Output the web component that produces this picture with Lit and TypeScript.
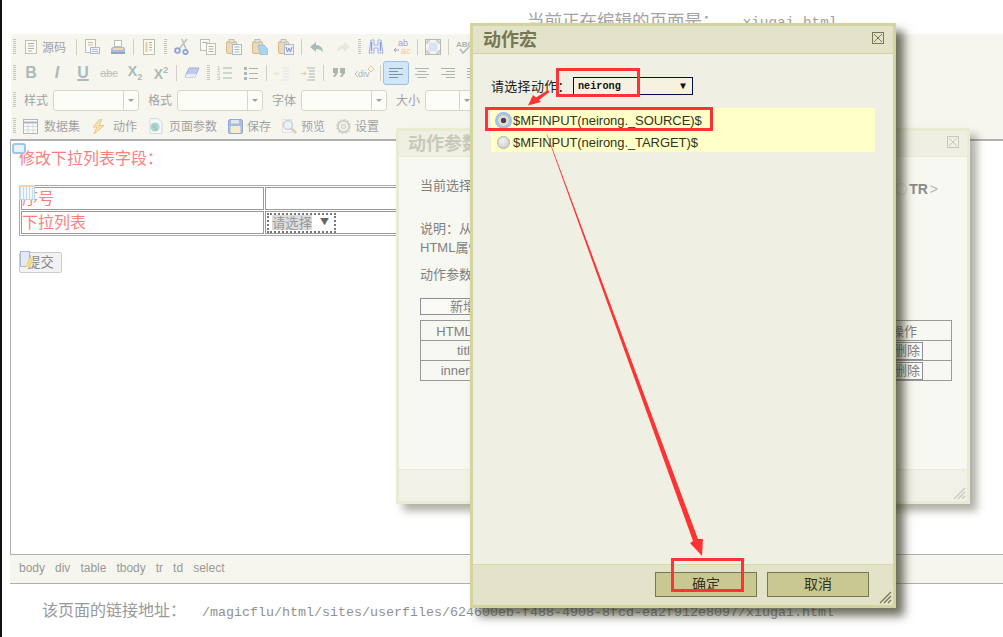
import { LitElement, html, css } from "lit";
import { customElement } from "lit/decorators.js";

const doc = (extra: unknown = "") => html`<svg width="16" height="16" viewBox="0 0 16 16"><rect x="2.5" y="1.5" width="11" height="13" fill="#fbfbf6" stroke="#bfc0b4"/><path d="M5 4.5h6M5 7h6M5 9.5h6M5 12h4" stroke="#a9b5ae"/>${extra}</svg>`;

const icons: Record<string, unknown> = {
  source: doc(),
  newpage: html`<svg width="16" height="16" viewBox="0 0 16 16"><rect x="1.5" y="0.5" width="10" height="13" fill="#fbfbf6" stroke="#bfc0b4"/><path d="M4 3.5h5M4 6h5" stroke="#e3b98a"/><rect x="6.5" y="8.5" width="9" height="6" fill="#eef1fb" stroke="#a9b8de"/><path d="M8 10.5h6M8 12.5h6" stroke="#b4c0e0"/></svg>`,
  print: html`<svg width="16" height="16" viewBox="0 0 16 16"><rect x="4.5" y="1.5" width="7" height="6" fill="#fbfbf6" stroke="#bfc0b4"/><path d="M2 8h12l1 2v4H1v-4z" fill="#a9bbdf"/><rect x="3" y="9" width="10" height="2" fill="#efd9a9"/><rect x="1" y="13" width="14" height="2" fill="#8ea4cf"/></svg>`,
  preview: html`<svg width="16" height="16" viewBox="0 0 16 16"><rect x="2.5" y="0.5" width="11" height="15" fill="#fbfbf6" stroke="#bfc0b4"/><path d="M5.5 3v10" stroke="#efc98f" stroke-width="2"/><path d="M8 3.5h3M8 6h3M8 8.5h3M8 11h3" stroke="#a9b5ae"/></svg>`,
  cut: html`<svg width="16" height="16" viewBox="0 0 16 16"><path d="M13 0 6 9M8 0l4 10" stroke="#bcc2c2" stroke-width="1.6" fill="none"/><circle cx="3.5" cy="11.5" r="2.4" fill="none" stroke="#8da3d6" stroke-width="1.8"/><circle cx="11.5" cy="13" r="2.2" fill="none" stroke="#8da3d6" stroke-width="1.8"/></svg>`,
  copy: html`<svg width="16" height="16" viewBox="0 0 16 16"><rect x="0.5" y="0.5" width="9" height="11" fill="#fbfbf6" stroke="#bfc0b4"/><rect x="6.5" y="4.5" width="9" height="11" fill="#fbfbf6" stroke="#bfc0b4"/><path d="M8.5 7.5h5M8.5 10h5M8.5 12.5h5M2.5 3.5h5" stroke="#a9b5ae"/></svg>`,
  paste: html`<svg width="16" height="16" viewBox="0 0 16 16"><rect x="0.5" y="2.5" width="10" height="12" rx="1.5" fill="#f2d8b2" stroke="#d4b98e"/><rect x="3" y="0.5" width="5" height="3" fill="#e4e4da" stroke="#bfc0b4"/><rect x="6.5" y="5.5" width="9" height="10" fill="#fbfbf6" stroke="#a9b8de"/><path d="M8.5 8h5M8.5 10.5h5M8.5 13h5" stroke="#a9b5ae"/></svg>`,
  pastetext: html`<svg width="16" height="16" viewBox="0 0 16 16"><rect x="0.5" y="2.5" width="10" height="12" rx="1.5" fill="#f2d8b2" stroke="#d4b98e"/><rect x="3" y="0.5" width="5" height="3" fill="#e4e4da" stroke="#bfc0b4"/><path d="M6 6h6l3.5 4v5.5H8z" fill="#a7d6ec" stroke="#9cc4dc"/></svg>`,
  pasteword: html`<svg width="16" height="16" viewBox="0 0 16 16"><rect x="0.5" y="2.5" width="10" height="12" rx="1.5" fill="#f2d8b2" stroke="#d4b98e"/><rect x="3" y="0.5" width="5" height="3" fill="#e4e4da" stroke="#bfc0b4"/><rect x="6.5" y="5.5" width="9" height="10" fill="#eef1fb" stroke="#a9b8de"/><path d="M8 8l1.5 5 1.5-4 1.5 4L14 8" stroke="#7f94c8" fill="none"/></svg>`,
  undo: html`<svg width="16" height="16" viewBox="0 0 16 16"><path d="M7 3 1 8l6 5v-3c3 0 5 1 7 3 0-4-3-7-7-7z" fill="#a9bbb8"/></svg>`,
  redo: html`<svg width="16" height="16" viewBox="0 0 16 16"><path d="m9 3 6 5-6 5v-3c-3 0-5 1-7 3 0-4 3-7 7-7z" fill="#e6e9e2"/></svg>`,
  find: html`<svg width="16" height="16" viewBox="0 0 16 16"><path d="M3 1h3v5h4V1h3l2 13h-5V9H6v5H1z" fill="#eef1fb" stroke="#a3b1de"/><path d="M3.5 3v9M12.5 3v9" stroke="#8fa0d4" stroke-width="1.5"/></svg>`,
  replace: html`<svg width="18" height="16" viewBox="0 0 18 16"><text x="5" y="7" font-size="9" font-family="Liberation Sans" fill="#a79bd0">ab</text><text x="8" y="15" font-size="9" font-family="Liberation Sans" fill="#efc98f">ac</text><path d="M1 11h5M3 9l-2 2 2 2" stroke="#a79bd0" fill="none"/></svg>`,
  max: html`<svg width="16" height="16" viewBox="0 0 16 16"><rect x="0.5" y="0.5" width="15" height="15" fill="none" stroke="#b4b9b2"/><rect x="3.5" y="3.5" width="9" height="9" fill="#dbe3f2"/><path d="M2 2h3M2 2v3M14 2h-3M14 2v3M2 14h3M2 14v-3M14 14h-3M14 14v-3" stroke="#a9b5ae"/></svg>`,
  spell: html`<svg width="16" height="16" viewBox="0 0 16 16"><text x="0" y="8" font-size="8" font-weight="700" font-family="Liberation Sans" fill="#a9b5ae">ABC</text><path d="m4 10 3 4 6-6" stroke="#a9bbb8" stroke-width="1.5" fill="none"/></svg>`,
  eraser: html`<svg width="16" height="12" viewBox="0 0 16 12"><path d="M5 1h10l-4 9H1z" fill="#bccbee" stroke="#a3b1de"/><path d="M1 10h10l1.5-3H3z" fill="#e9edf8"/></svg>`,
  ol: html`<svg width="16" height="16" viewBox="0 0 16 16"><text x="0" y="5" font-size="5.5" font-family="Liberation Sans" fill="#a9b5ae">1</text><text x="0" y="10" font-size="5.5" font-family="Liberation Sans" fill="#a9b5ae">2</text><text x="0" y="15" font-size="5.5" font-family="Liberation Sans" fill="#a9b5ae">3</text><path d="M6 3h9M6 8h9M6 13h9" stroke="#a9b5ae"/></svg>`,
  ul: html`<svg width="16" height="16" viewBox="0 0 16 16"><path d="M1 2h3v3H1zM1 7h3v3H1zM1 12h3v3H1z" fill="#a9bbb8"/><path d="M6 3.5h9M6 8.5h9M6 13.5h9" stroke="#a9b5ae"/></svg>`,
  outdent: html`<svg width="16" height="16" viewBox="0 0 16 16"><path d="M7 3h8M9 6h6M9 9h6M9 12h6M7 15h8" stroke="#e2e5de"/><path d="M6 8.5H1M3 6.5l-2 2 2 2" stroke="#f5e2c6" fill="none"/></svg>`,
  indent: html`<svg width="16" height="16" viewBox="0 0 16 16"><path d="M7 3h8M9 6h6M9 9h6M9 12h6M7 15h8" stroke="#a9b5ae"/><path d="M1 8.5h5M4 6.5l2 2-2 2" stroke="#efc98f" fill="none"/></svg>`,
  quote: html`<svg width="16" height="16" viewBox="0 0 16 16"><path d="M2 3h5v5l-3 4H2l2-4H2zM9 3h5v5l-3 4H9l2-4H9z" fill="#a9b5ae"/></svg>`,
  div: html`<svg width="20" height="16" viewBox="0 0 20 16"><text x="3" y="12" font-size="9" font-family="Liberation Sans" fill="#a9b5ae">div</text><path d="M3 6 0 9l3 3" stroke="#bfc4bc" fill="none"/><path d="m16 1 3 3-3 3-3-3z" fill="none" stroke="#efc98f"/></svg>`,
  left: html`<svg width="14" height="12" viewBox="0 0 14 12"><path d="M0 1.5h14M0 4.5h9M0 7.5h14M0 10.5h9" stroke="#7f9696"/></svg>`,
  center: html`<svg width="14" height="12" viewBox="0 0 14 12"><path d="M0 1.5h14M2.5 4.5h9M0 7.5h14M2.5 10.5h9" stroke="#a9b5ae"/></svg>`,
  right: html`<svg width="14" height="12" viewBox="0 0 14 12"><path d="M0 1.5h14M5 4.5h9M0 7.5h14M5 10.5h9" stroke="#a9b5ae"/></svg>`,
  justify: html`<svg width="14" height="12" viewBox="0 0 14 12"><path d="M0 1.5h14M0 4.5h14M0 7.5h14M0 10.5h14" stroke="#a9b5ae"/></svg>`,
  table: html`<svg width="15" height="15" viewBox="0 0 15 15"><rect x="0.5" y="0.5" width="14" height="14" fill="#fbfbf6" stroke="#aab7c4"/><path d="M0 3.5h15" stroke="#aab7c4" stroke-width="2"/><path d="M5 4v10M10 4v10M1 7.5h13M1 11h13" stroke="#d5dade"/></svg>`,
  bolt: html`<svg width="15" height="15" viewBox="0 0 15 15"><path d="M9 0 2 8h4l-3 7 10-8.5H8l3-6.5z" fill="#f6e3b0" stroke="#e3c88a"/></svg>`,
  globe: html`<svg width="15" height="16" viewBox="0 0 15 16"><path d="M2 .5h8l4 4v11H2z" fill="#f4f6f8" stroke="#d3d8dc"/><circle cx="7" cy="9" r="4.5" fill="#a9d3e8"/><path d="M4 7c2-2 4-1 4 1s2 2 1 4-3 1-3-1-3-1-2-4z" fill="#a7cfa0"/></svg>`,
  save: html`<svg width="15" height="15" viewBox="0 0 15 15"><rect x="0.5" y="0.5" width="14" height="14" rx="1.5" fill="#a8bcdf" stroke="#97abd2"/><rect x="3" y="1" width="8" height="3.5" fill="#dfe6f2"/><rect x="2.5" y="7" width="10" height="7" fill="#f7ecc8"/></svg>`,
  search: html`<svg width="15" height="15" viewBox="0 0 15 15"><rect x="0.5" y="0.5" width="9" height="13" fill="#fbfbf8" stroke="#e2e2da"/><circle cx="6" cy="6" r="4.5" fill="#e8f1f6" stroke="#c9d2d6" stroke-width="1.5"/><path d="m9.500 9.500 4.500 4.500" stroke="#d8cfc0" stroke-width="2.5"/></svg>`,
  gear: html`<svg width="15" height="15" viewBox="0 0 16 16"><circle cx="8" cy="8" r="6" fill="none" stroke="#c9cbc4" stroke-width="2"/><circle cx="8" cy="8" r="7" fill="none" stroke="#d3d5ce" stroke-width="2" stroke-dasharray="2 1.66"/><circle cx="8" cy="8" r="2.5" fill="#e8e9e3" stroke="#c9cbc4"/></svg>`,
};

const resizer = (c: string) => html`<svg class="resizer" width="13" height="13" viewBox="0 0 13 13"><path d="M1 12 12 1M5 12l7-7M9 12l3-3" stroke=${c} stroke-width="1.3"/></svg>`;
const closeX = (c: string) => html`<svg width="12" height="12" viewBox="0 0 12 12"><rect x="0.5" y="0.5" width="11" height="11" fill="none" stroke=${c}/><path d="m2 2 8 8M10 2l-8 8" stroke=${c}/></svg>`;

@customElement("app-root")
export class AppRoot extends LitElement {
  static styles = css`
    :host { display: block; width: 1003px; height: 637px; position: relative; overflow: hidden; background: #fff;
      font-family: "Noto Sans CJK SC", "Liberation Sans", sans-serif; }
    .page { height: 637px; border-left: 2px solid #111; display: flex; flex-direction: column; box-sizing: border-box; color: #999; }
    .top { height: 34px; flex: none; padding-left: 525px; font-size: 17.5px; line-height: 40px; white-space: nowrap; overflow: hidden; color: #a4a4a4; }
    .mono { font-family: "Liberation Mono", monospace; }
    .top .mono { font-size: 14.4px; margin-left: 23px; }
    .editor { margin-left: 8px; flex: none; height: 550px; display: flex; flex-direction: column; }
    .toolbar { background: #f6f6ef; height: 105px; flex: none; font-size: 12px; color: #a2a2a2; margin-left: 1px; white-space: nowrap; }
    .row { display: flex; align-items: center; padding-left: 2px; }
    .r1, .r2 { height: 26px; }
    .r3 { height: 28px; }
    .r4 { height: 24px; }
    .grip { width: 3px; height: 16px; margin: 0 2px 0 0; flex: none;
      background: repeating-linear-gradient(to bottom, #c6c6bc 0 1px, transparent 1px 2px); }
    .gripmid { margin-left: 2px; }
    .sep { width: 1px; height: 16px; background: #cfcfc6; margin: 0 2px; flex: none; }
    .btn { width: 26px; height: 24px; flex: none; display: flex; align-items: center; justify-content: center; box-sizing: border-box; }
    .src { display: flex; align-items: center; margin-left: 7px; gap: 3px; margin-right: 8px; }
    .src svg { margin-left: -2px; }
    .src span { padding-bottom: 2px; }
    .fmt { color: #aabab8; font-family: "Liberation Sans", sans-serif; font-size: 16px; line-height: 1; }
    .b { font-weight: 700; }
    .i { font-style: italic; font-weight: 700; }
    .u { font-weight: 700; text-decoration: underline; text-decoration-thickness: 2px; }
    .s { font-size: 11px; text-decoration: line-through; color: #bcc4c0; }
    .sub, .sup { font-weight: 700; font-size: 14px; }
    .fmt small { font-size: 9px; }
    .sub small { vertical-align: -4px; }
    .sup small { vertical-align: 6px; }
    .active { background: #cfe6fb; border: 1px solid #9dbfe6; border-radius: 3px; }
    .lbl { margin: 0 5px 0 9px; flex: none; width: 24px; font-size: 12px; padding-bottom: 2px; }
    .r3 .grip { margin-right: -1px; }
    .combo { width: 86px; height: 21px; box-sizing: border-box; border: 1px solid #d6d6ca; border-radius: 3px; background: #fdfdf8; display: flex; justify-content: flex-end; flex: none; }
    .combo.small { width: 50px; }
    .combo i { width: 14px; border-left: 1px solid #d6d6ca; display: flex; align-items: center; justify-content: center; }
    .combo i::after { content: ""; border: 3px solid transparent; border-top-color: #a0a0a0; margin-top: 3px; }
    .r4 .grip { margin-right: -4px; }
    .tool { display: flex; align-items: center; margin-left: 11px; flex: none; }
    .tool span { padding-bottom: 2px; }
    .g4 { gap: 4px; } .g6 { gap: 6px; } .g7 { gap: 7px; }
    .content { flex: 1; background: #fff; border-top: 2px solid #b0b0b0; border-left: 1px solid #b0b0b0; padding: 4px 0 0 8px; position: relative; color: #ff7d7d; }
    .heading { font-size: 16px; line-height: 24px; }
    table.form { margin-top: 16px; width: 510px; border: 1px solid #aaa; border-spacing: 1px; font-size: 16px; }
    table.form td { box-sizing: border-box; border: 1px solid #999; padding: 0 0 3px 0; height: 22px; line-height: 18px; }
    table.form tr + tr td { height: 23px; }
    table.form td:first-child { width: 243px; }
    table.form td.plain { padding: 0 0 0 1px; vertical-align: top; }
    .sel { display: inline-flex; box-sizing: border-box; align-items: center; height: 20px; width: 69px; border: 2px dotted #777; font-size: 13.333px; color: #999; vertical-align: top; margin-top: 1px; padding: 0 0 2px 3px; gap: 8px; }
    .sel b { background: #ddd; font-weight: 400; line-height: 15px; }
    .sel em { font-style: normal; color: #666; font-size: 9px; }
    .submit { margin-top: 16px; width: 43px; height: 21px; box-sizing: border-box; background: #f2f2f2; border: 1px solid #ccc; border-radius: 2px; font-size: 13.333px; color: #888; display: flex; align-items: center; justify-content: center; padding-bottom: 2px; line-height: 1; }
    .ov { position: absolute; }
    .bubble { left: 1px; top: 2px; width: 14px; height: 11px; box-sizing: border-box; border: 2px solid #9cc7ec; border-radius: 3px; background: #e7f3fc; }
    .tblmark { left: 8px; top: 44px; width: 16px; height: 15px; box-sizing: border-box; border: 1px solid #b9d7ee; border-top: 2px solid #f3d6a3; background: repeating-linear-gradient(to right, #bcdcf5 0 1px, #f2f8fd 1px 3px); }
    .btnmark { left: 9px; top: 110px; width: 8px; height: 14px; background: #e4eaf4; border: 1px solid #aab7c9; }
    .btnmark::after { content: ""; position: absolute; left: 6px; top: 6px; width: 5px; height: 9px; background: #f3d98c; transform: skewX(-15deg); }
    .path { height: 30px; box-sizing: border-box; flex: none; background: #f6f6ef; border-top: 1px solid #b0b0b0; border-bottom: 1px solid #b0b0b0; display: flex; align-items: center; gap: 10px; padding: 0 0 3px 9px; font: 12px "Liberation Sans", sans-serif; color: #999; }
    .foot { padding: 13px 0 0 40px; font-size: 16px; line-height: 24px; color: #999; white-space: nowrap; }
    .foot .mono { font-size: 13.333px; margin-left: 16px; color: #909090; }

    .dlg { position: absolute; box-sizing: border-box; display: flex; flex-direction: column; }
    .d2 { left: 396px; top: 128px; width: 574px; height: 376px; border: 3px solid #e9ebd2; background: #f8f8f2; box-shadow: 7px 7px 8px rgba(60,60,40,.4); color: #808080; font: 13px "Liberation Sans", "Noto Sans CJK SC", sans-serif; }
    .d2 .hd { height: 26px; background: #efefe3; display: flex; align-items: center; justify-content: space-between; padding: 0 8px 3px 9px; box-sizing: border-box; flex: none; font-size: 18px; font-weight: 700; color: #c9c9b7; border-bottom: 1px solid #e9ebd2; }
    .d2 .bd { flex: 1; padding: 20px 16px 0 21px; display: flex; flex-direction: column; }
    .d2 p { margin: 0; line-height: 19px; white-space: nowrap; overflow: hidden; }
    .d2 .first { display: flex; justify-content: space-between; padding-right: 13px; align-items: center; height: 24px; margin-bottom: 18px; }
    .d2 .first > span:first-child { padding-bottom: 8px; }
    .trsel { display: flex; align-items: center; gap: 2px; font: 700 14px "Liberation Sans", sans-serif; color: #8a8a8a; }
    .trsel span { font-weight: 400; color: #b5b5b5; }
    .radio2 { width: 10px; height: 10px; border: 1px solid #ddd; border-radius: 50%; display: block; }
    .d2 .mt { margin-top: 8px; }
    .addbtn { margin-top: 14px; width: 86px; height: 17px; box-sizing: border-box; border: 1px solid #8e8ca0; background: #fbf9f3; text-align: center; line-height: 15px; }
    table.params { margin-top: 5px; width: 532px; border: 1px solid #999; border-spacing: 0; border-collapse: collapse; text-align: center; }
    table.params td { border: 1px solid #999; height: 19px; padding: 0; }
    table.params tr:first-child td { height: 17px; }
    table.params .c1 { width: 92px; }
    table.params .c3 { width: 60px; text-align: left; padding-left: 3px; }
    .del { display: block; width: 32px; height: 18px; box-sizing: border-box; border: 1px solid #8e8ca0; background: #fbf9f3; text-align: center; line-height: 16px; }
    .d2 .ft { height: 31px; flex: none; background: #f1f1e7; border-top: 1px solid #e9ebd2; position: relative; }
    .resizer { position: absolute; right: 1px; bottom: 1px; }

    .d1 { left: 470px; top: 23px; width: 426px; height: 585px; border: 3px solid #d4d4a0; background: #efefe3; box-shadow: 8px 8px 9px rgba(50,50,30,.7); color: #222; }
    .d1 .hd { height: 28px; box-sizing: border-box; background: #e3e3c9; border-bottom: 1px solid #d4d4a0; display: flex; align-items: center; justify-content: space-between; padding: 0 9px 3px 10px; flex: none; font-size: 18px; font-weight: 700; color: #777755; }
    .d1 .bd { flex: 1; padding: 23px 18px 0; }
    .pick { display: flex; align-items: center; height: 18px; font-size: 13px; color: #222; }
    .pick label { width: 82px; flex: none; letter-spacing: .3px; padding-bottom: 1px; }
    .select { width: 120px; height: 18px; box-sizing: border-box; border: 1px solid #001144; background: #f6f1e0; display: flex; align-items: center; justify-content: space-between; padding: 0 6px 0 4px; font: 700 10.2px "Liberation Mono", monospace; color: #111; }
    .select em { font-style: normal; font-size: 10px; }
    .rows { margin-top: 13px; background: #ffffc8; height: 44px; display: flex; flex-direction: column; font: 13px "Liberation Sans", sans-serif; letter-spacing: -.08px; color: #333322; }
    .rows div { height: 22px; box-sizing: border-box; padding: 2px 0 0 6px; display: flex; align-items: center; gap: 3px; }
    .radio { width: 13px; height: 13px; box-sizing: border-box; border-radius: 50%; background: radial-gradient(circle at 40% 35%, #f4f4f4, #c4c4c4); border: 1px solid #b0b0b0; display: flex; align-items: center; justify-content: center; }
    .radio.on { outline: 2px solid #9cc0ee; background: radial-gradient(circle, #444 0 2.5px, #dcdcdc 3px); }
    .d1 .ft { height: 41px; box-sizing: border-box; flex: none; background: #e3e3c9; border-top: 1px solid #d8d8a8; display: flex; justify-content: flex-end; gap: 10px; padding: 7px 24px 0 0; position: relative; }
    .d1 .ft button { width: 102px; height: 25px; box-sizing: border-box; background: #c8c890; border: 1px solid #777755; color: #333322; font: 14px "Noto Sans CJK SC", sans-serif; padding: 0 0 3px; }
    .marks { position: absolute; left: 0; top: 0; pointer-events: none; }
  `;

  render() {
    const tb = (names: string[]) => names.map((n) => html`<span class="btn">${icons[n]}</span>`);
    return html`
      <div class="page">
        <div class="top">当前正在编辑的页面是：<span class="mono">xiugai.html</span></div>
        <div class="editor">
          <div class="toolbar">
            <div class="row r1">
              <span class="grip"></span>
              <span class="src">${icons.source}<span>源码</span></span>
              <span class="sep"></span>${tb(["newpage", "print"])}
              <span class="sep"></span>${tb(["preview"])}
              <span class="grip gripmid"></span>${tb(["cut", "copy", "paste", "pastetext", "pasteword"])}
              <span class="sep"></span>${tb(["undo", "redo"])}
              <span class="grip gripmid"></span>${tb(["find", "replace"])}
              <span class="sep"></span>${tb(["max"])}
              <span class="sep"></span>${tb(["spell"])}
            </div>
            <div class="row r2">
              <span class="grip"></span>
              <span class="btn fmt b">B</span>
              <span class="btn fmt i">I</span>
              <span class="btn"><span class="fmt u">U</span></span>
              <span class="btn fmt s">abc</span>
              <span class="btn"><span class="fmt sub">X<small>2</small></span></span>
              <span class="btn"><span class="fmt sup">X<small>2</small></span></span>
              <span class="sep"></span>${tb(["eraser"])}
              <span class="grip gripmid"></span>${tb(["ol", "ul"])}
              <span class="sep"></span>${tb(["outdent", "indent"])}
              <span class="sep"></span>${tb(["quote", "div"])}
              <span class="sep"></span>
              <span class="btn active">${icons.left}</span>${tb(["center", "right", "justify"])}
            </div>
            <div class="row r3">
              <span class="grip"></span>
              <span class="lbl">样式</span><span class="combo"><i></i></span>
              <span class="lbl">格式</span><span class="combo"><i></i></span>
              <span class="lbl">字体</span><span class="combo"><i></i></span>
              <span class="lbl">大小</span><span class="combo small"><i></i></span>
            </div>
            <div class="row r4">
              <span class="grip"></span>
              <span class="tool g6">${icons.table}<span>数据集</span></span>
              <span class="tool g7">${icons.bolt}<span>动作</span></span>
              <span class="tool g6">${icons.globe}<span>页面参数</span></span>
              <span class="tool g4">${icons.save}<span>保存</span></span>
              <span class="tool g4">${icons.search}<span>预览</span></span>
              <span class="tool g4">${icons.gear}<span>设置</span></span>
            </div>
          </div>
          <div class="content">
            <div class="heading">修改下拉列表字段：</div>
            <table class="form">
              <tr><td>序号</td><td></td></tr>
              <tr><td>下拉列表</td><td class="plain"><span class="sel"><b>请选择</b><em>▼</em></span></td></tr>
            </table>
            <div class="submit">提交</div>
            <span class="ov bubble"></span>
            <span class="ov tblmark"></span>
            <span class="ov btnmark"></span>
          </div>
          <div class="path">
            ${["body", "div", "table", "tbody", "tr", "td", "select"].map((p) => html`<span>${p}</span>`)}
          </div>
        </div>
        <div class="foot">该页面的链接地址：<span class="mono">/magicflu/html/sites/userfiles/624600eb-f488-4908-8fcd-ea2f912e8097/xiugai.html</span></div>
      </div>

      <div class="dlg d2">
        <div class="hd"><span>动作参数</span>${closeX("#c9c9bd")}</div>
        <div class="bd">
          <p class="first"><span>当前选择的元素：</span><span class="trsel"><i class="radio2"></i>TR <span>&gt;</span></span></p>
          <p>说明：从下面的列表中选择动作参数，</p>
          <p>HTML属性将作为动作的输入。</p>
          <p class="mt">动作参数：</p>
          <div class="addbtn">新增</div>
          <table class="params">
            <tr><td class="c1">HTML属性</td><td>动作参数</td><td class="c3">操作</td></tr>
            <tr><td class="c1">title</td><td></td><td class="c3"><span class="del">删除</span></td></tr>
            <tr><td class="c1">innerText</td><td></td><td class="c3"><span class="del">删除</span></td></tr>
          </table>
        </div>
        <div class="ft">${resizer("#c9c9bd")}</div>
      </div>

      <div class="dlg d1">
        <div class="hd"><span>动作宏</span>${closeX("#777755")}</div>
        <div class="bd">
          <div class="pick"><label>请选择动作：</label><div class="select"><span>neirong</span><em>▼</em></div></div>
          <div class="rows">
            <div><span class="radio on"></span><span>$MFINPUT(neirong._SOURCE)$</span></div>
            <div><span class="radio"></span><span>$MFINPUT(neirong._TARGET)$</span></div>
          </div>
        </div>
        <div class="ft"><button>确定</button><button>取消</button>${resizer("#777755")}</div>
      </div>

      <svg class="marks" width="1003" height="637" viewBox="0 0 1003 637">
        <g fill="none" stroke="#f33" stroke-width="3">
          <rect x="557.5" y="69.5" width="81" height="26"/>
          <rect x="486.5" y="108.5" width="225" height="21"/>
          <rect x="672.5" y="559.5" width="70" height="31"/>
        </g>
        <path d="M548 90 549.5 92 539 100 541 102 528 105.5 533 95 536 97.5z" fill="#f33"/>
        <path d="M547 134 698 539 703 539 702 556 690 543 693 541 546.5 134z" fill="#f33"/>
      </svg>
    `;
  }
}
